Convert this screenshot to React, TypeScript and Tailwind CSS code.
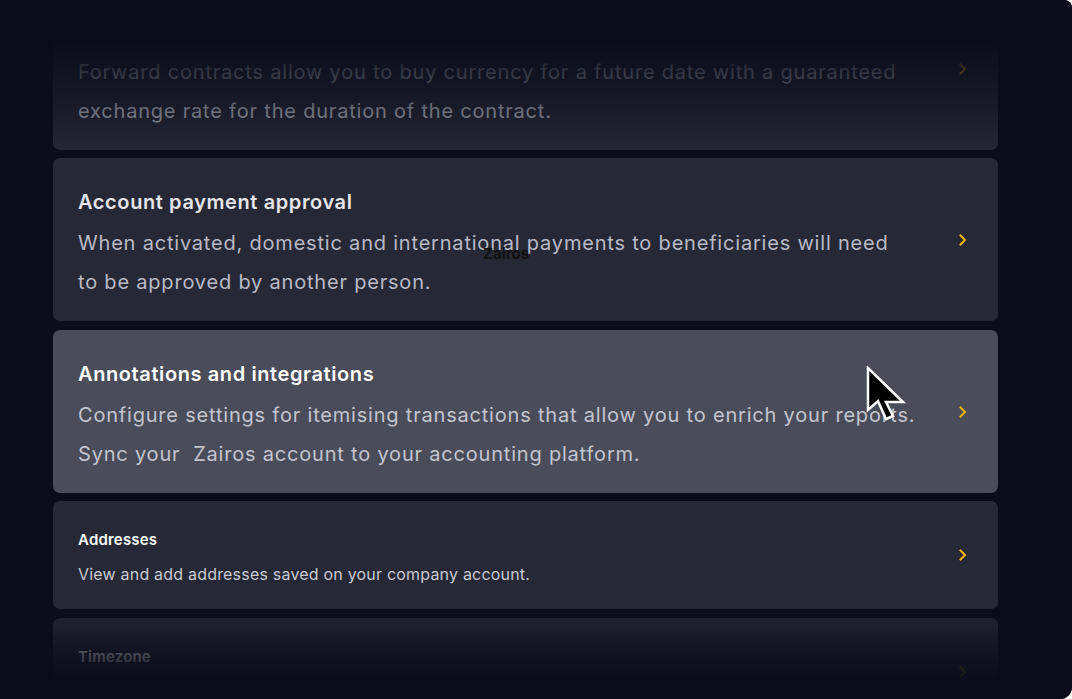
import React from "react";

type Setting = {
  title: string;
  body: string;
  size: "lg" | "sm";
  active?: boolean;
};

const settings: Setting[] = [
  {
    title: "Forward contracts",
    body: "Forward contracts allow you to buy currency for a future date with a guaranteed\nexchange rate for the duration of the contract.",
    size: "lg",
  },
  {
    title: "Account payment approval",
    body: "When activated, domestic and international payments to beneficiaries will need\nto be approved by another person.",
    size: "lg",
  },
  {
    title: "Annotations and integrations",
    body: "Configure settings for itemising transactions that allow you to enrich your reports.\nSync your  Zairos account to your accounting platform.",
    size: "lg",
    active: true,
  },
  {
    title: "Addresses",
    body: "View and add addresses saved on your company account.",
    size: "sm",
  },
  {
    title: "Timezone",
    body: "Set the timezone used for dates and times across your account.",
    size: "sm",
  },
];

const Chevron = () => (
  <svg width="10" height="12" viewBox="0 0 10 12" fill="none" className="shrink-0">
    <path d="M2.5 1.5 L7 6 L2.5 10.5" stroke="#f2b50c" strokeWidth="2" strokeLinecap="square" />
  </svg>
);

const Cursor = () => (
  <svg width="42" height="58" viewBox="0 0 42 58" className="absolute left-[866px] top-[366px]">
    <path
      d="M2 2 L2 44 L12 35 L20 53 L27 50 L20 36 L37 36 Z"
      fill="#000"
      stroke="#fff"
      strokeWidth="2.5"
      strokeLinejoin="miter"
    />
  </svg>
);

const SettingCard = ({ item, extraTop }: { item: Setting; extraTop: boolean }) => {
  const big = item.size === "lg";
  return (
    <div
      className={`flex rounded-[7px] pl-[25px] pr-[30px] ${extraTop ? "mt-[1px]" : ""} ${
        item.active ? "bg-[#4a4c5a]" : "bg-[#262835]"
      }`}
    >
      <div className={`w-[852px] ${big ? "pt-[30px] pb-[19px]" : "pt-[29px] pb-[24px]"}`}>
        <p
          className={
            big
              ? `text-[20px] leading-[28px] font-semibold tracking-[0.6px] ${item.active ? "text-white" : "text-[#e4e4ea]"}`
              : "text-[15px] leading-[20px] font-semibold tracking-[0.2px] text-white"
          }
        >
          {item.title}
        </p>
        <p
          className={
            big
              ? `mt-[8px] text-[20px] leading-[39px] tracking-[0.8px] whitespace-pre-wrap ${item.active ? "text-[#c4c5cf]" : "text-[#b9bac6]"}`
              : "mt-[13px] text-[16px] leading-[22px] tracking-[0.2px] text-[#c9cad2]"
          }
        >
          {item.body}
        </p>
      </div>
      <div className="flex-1 flex items-center justify-end">
        <Chevron />
      </div>
    </div>
  );
};

export default function App() {
  return (
    <div className="w-[1072px] h-[699px] bg-white">
      <div
        className="relative w-full h-full overflow-hidden bg-[#0a0d19] rounded-tr-[8px] rounded-br-[12px]"
        style={{ fontFamily: "Inter, 'Noto Sans', sans-serif" }}
      >
        <div className="ml-[53px] w-[945px] mt-[-13px] flex flex-col gap-[8px]">
          {settings.map((s, i) => (
            <SettingCard key={s.title} item={s} extraTop={i === 2 || i === 4} />
          ))}
        </div>

        <div className="absolute left-0 top-0 w-full h-[160px] bg-gradient-to-b from-[#0a0d19] from-25% via-[#0a0d19]/65 via-55% to-transparent" />
        <div className="absolute left-0 bottom-0 w-full h-[92px] bg-gradient-to-t from-[#0a0d19] from-20% via-[#0a0d19]/70 via-55% to-transparent" />

        <span className="absolute left-[483px] top-[245px] text-[15px] leading-[18px] font-bold text-[#111]">
          Zairos
        </span>
        <Cursor />
      </div>
    </div>
  );
}
